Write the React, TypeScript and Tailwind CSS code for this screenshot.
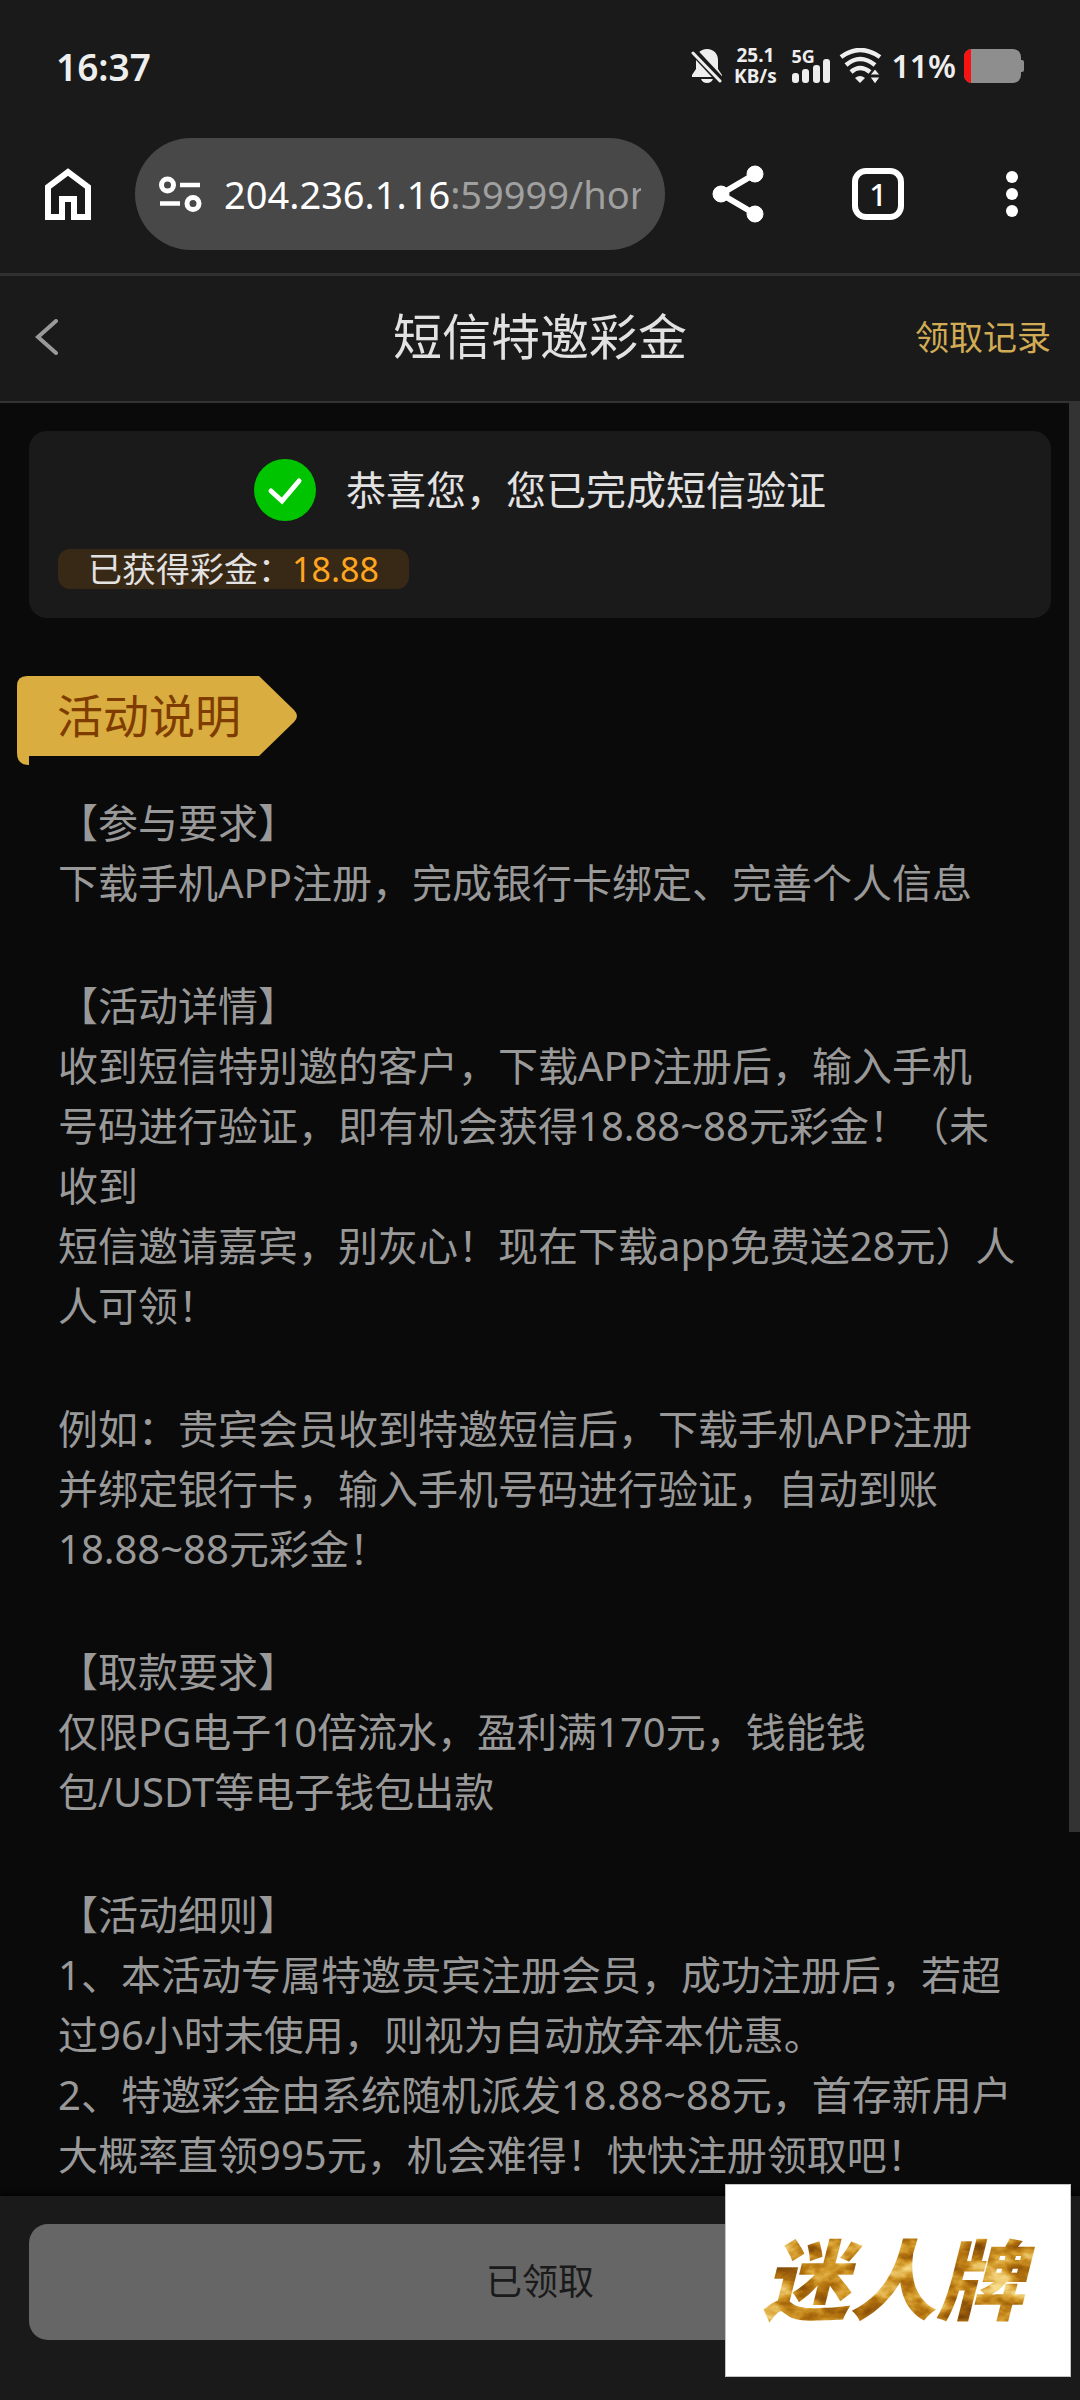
import React from "react";

const rules: { title: string; lines: string[] }[] = [
  {
    title: "【参与要求】",
    lines: ["下载手机APP注册，完成银行卡绑定、完善个人信息"],
  },
  {
    title: "【活动详情】",
    lines: [
      "收到短信特别邀的客户，下载APP注册后，输入手机",
      "号码进行验证，即有机会获得18.88~88元彩金！（未",
      "收到",
      "短信邀请嘉宾，别灰心！现在下载app免费送28元）人",
      "人可领！",
    ],
  },
  {
    title: "",
    lines: [
      "例如：贵宾会员收到特邀短信后，下载手机APP注册",
      "并绑定银行卡，输入手机号码进行验证，自动到账",
      "18.88~88元彩金！",
    ],
  },
  {
    title: "【取款要求】",
    lines: ["仅限PG电子10倍流水，盈利满170元，钱能钱", "包/USDT等电子钱包出款"],
  },
  {
    title: "【活动细则】",
    lines: [
      "1、本活动专属特邀贵宾注册会员，成功注册后，若超",
      "过96小时未使用，则视为自动放弃本优惠。",
      "2、特邀彩金由系统随机派发18.88~88元，首存新用户",
      "大概率直领995元，机会难得！快快注册领取吧！",
    ],
  },
];

function StatusBar() {
  return (
    <div className="flex h-[132px] items-center justify-between pr-14 pl-14 text-[#eeeeee]">
      <span className="text-[37px] leading-none font-semibold">16:37</span>
      <div className="flex items-center">
        <svg className="h-9 w-8" viewBox="0 0 32 36" fill="#eeeeee" aria-label="静音">
          <path d="M16 1c-7 0-11 5-11 11v9l-4 6v2h30v-2l-4-6v-9C27 6 23 1 16 1z" />
          <path d="M10 31h12c-1 2.500-3 4-6 4s-5-1.500-6-4z" />
          <path d="M1 2L31 34" stroke="#1a1a1a" strokeWidth="8" />
          <path d="M2 5L29 33" stroke="#eeeeee" strokeWidth="3" strokeLinecap="round" />
        </svg>
        <div className="ml-3 flex w-10 flex-col items-center text-[19px] leading-[21px] font-bold">
          <span>25.1</span>
          <span>KB/s</span>
        </div>
        <div className="ml-4 flex flex-col">
          <span className="text-[18px] leading-[14px] font-bold">5G</span>
          <svg className="-mt-1 h-6 w-10" viewBox="0 0 40 24" fill="#eeeeee" aria-label="信号">
            <rect x="1" y="14" width="7" height="10" rx="3" />
            <rect x="11" y="10" width="7" height="14" rx="3" />
            <rect x="22" y="6" width="7" height="18" rx="3" />
            <rect x="32" y="0" width="7" height="24" rx="3" />
          </svg>
        </div>
        <svg className="ml-2 h-9 w-[44px]" viewBox="0 0 44 36" fill="none" stroke="#eeeeee" strokeWidth="4.500" aria-label="无线网络">
          <path d="M2 9Q21-5 41 9" />
          <path d="M7 17Q21 5 36 17" />
          <path d="M12 24Q21 16 31 24" />
          <path d="M16 30Q21 26 26 30L21 35z" fill="#eeeeee" stroke="none" />
          <path d="M36 21l5 6H31zM36 36l5-7H31z" fill="#eeeeee" stroke="#1a1a1a" strokeWidth="1" />
        </svg>
        <span className="ml-2 text-[32px] leading-none font-semibold">11%</span>
        <svg className="ml-2 h-[34px] w-[60px]" viewBox="0 0 60 34" aria-label="电量">
          <clipPath id="cell">
            <rect width="57" height="34" rx="8" />
          </clipPath>
          <g clipPath="url(#cell)">
            <rect width="57" height="34" fill="#8e8e8e" />
            <rect width="7" height="34" fill="#f91212" />
          </g>
          <path d="M57 11h1q2 0 2 2v8q0 2-2 2h-1z" fill="#8e8e8e" />
        </svg>
      </div>
    </div>
  );
}

function BrowserBar() {
  return (
    <div className="flex h-[144px] items-center border-b-[3px] border-[#303030] pb-[17px] pl-[45px] text-white">
      <button type="button" aria-label="主页">
        <svg className="h-[52px] w-[46px]" viewBox="0 0 46 52" fill="none" stroke="white" strokeWidth="6">
          <path d="M3 49V19L23 4l20 15v30H29V31H17v18z" />
        </svg>
      </button>
      <button
        type="button"
        aria-label="地址栏"
        className="ml-11 flex h-28 min-w-0 flex-1 items-center rounded-full bg-[#484848] pr-6 pl-6"
      >
        <svg className="h-9 w-[43px] shrink-0" viewBox="0 0 43 36" fill="none" stroke="white" strokeWidth="5">
          <circle cx="8.500" cy="9" r="6" />
          <path d="M21 9h20M1 27.500h20" strokeWidth="4.500" />
          <circle cx="34" cy="27.500" r="6" />
        </svg>
        <span className="ml-[22px] min-w-0 flex-1 overflow-hidden text-left text-[38px] leading-[56px] whitespace-nowrap">
          204.236.1.16<span className="text-[#a0a0a0]">:59999/home</span>
        </span>
      </button>
      <button type="button" aria-label="分享" className="ml-[47px]">
        <svg className="h-[58px] w-[52px]" viewBox="0 0 52 58" fill="white" stroke="white">
          <path d="M43 9L9 29l34 20" fill="none" strokeWidth="6" />
          <circle cx="43" cy="9" r="8" />
          <circle cx="9" cy="29" r="8" />
          <circle cx="43" cy="49" r="8" />
        </svg>
      </button>
      <button
        type="button"
        aria-label="标签页"
        className="ml-[88px] flex size-[52px] items-center justify-center rounded-[14px] border-[6px] border-white text-[31px] leading-none font-medium"
      >
        1
      </button>
      <button type="button" aria-label="更多" className="mr-[62px] ml-[102px]">
        <svg className="h-12 w-3" viewBox="0 0 12 48" fill="white">
          <circle cx="6" cy="7" r="6" />
          <circle cx="6" cy="24" r="6" />
          <circle cx="6" cy="41" r="6" />
        </svg>
      </button>
    </div>
  );
}

function Logo() {
  return (
    <svg className="h-[120px] w-[300px]" viewBox="0 0 300 120" role="img" aria-label="迷人牌">
      <defs>
        <filter id="gold" x="0" y="0" width="1" height="1" colorInterpolationFilters="sRGB">
          <feTurbulence type="fractalNoise" baseFrequency="0.03 0.05" numOctaves="4" seed="7" />
          <feColorMatrix values="1 0 0 0 0  1 0 0 0 0  1 0 0 0 0  0 0 0 0 1" />
          <feComponentTransfer result="foil">
            <feFuncR type="table" tableValues="0.4 0.45 0.56 0.7 0.84 0.94 0.98 1" />
            <feFuncG type="table" tableValues="0.22 0.25 0.33 0.45 0.62 0.8 0.9 0.95" />
            <feFuncB type="table" tableValues="0.02 0.02 0.04 0.06 0.18 0.45 0.6 0.7" />
          </feComponentTransfer>
          <feComposite in="foil" in2="SourceAlpha" operator="in" />
        </filter>
      </defs>
      <text x="145" y="92" textAnchor="middle" className="text-[87px] font-black italic" filter="url(#gold)">
        迷人牌
      </text>
    </svg>
  );
}

export default function App() {
  return (
    <div
      lang="zh-CN"
      className="relative flex min-h-screen flex-col bg-[#0a0a0a] font-['Noto_Sans','Noto_Sans_CJK_SC',sans-serif] [text-spacing-trim:space-all]"
    >
      <div className="bg-[#1a1a1a]">
        <StatusBar />
        <BrowserBar />
        <header className="grid h-[127px] grid-cols-[1fr_auto_1fr] items-center border-b-2 border-[#333333] px-[29px] pb-1">
          <button type="button" aria-label="返回" className="justify-self-start pl-1.5">
            <svg className="h-9 w-6" viewBox="0 0 24 36" fill="none" stroke="#999999" strokeWidth="4" strokeLinecap="round">
              <path d="M21 2L3 18l18 16" />
            </svg>
          </button>
          <h1 className="text-[49px] leading-none text-[#e2e2e2]">短信特邀彩金</h1>
          <a href="#records" className="justify-self-end text-[34px] leading-none text-[#d2ab55]">
            领取记录
          </a>
        </header>
      </div>

      <main className="relative flex-1">
        <div className="absolute top-0 right-0 h-[1429px] w-[11px] bg-[#333333]" />
        <section className="mx-[29px] mt-7 rounded-[18px] bg-[#1a1a1a] px-[29px] pt-7 pb-[29px]">
          <div className="flex items-center justify-center gap-[30px]">
            <svg className="size-[62px]" viewBox="0 0 62 62" fill="none">
              <circle cx="31" cy="31" r="31" fill="#00c400" />
              <path d="M17 32l11 10L45 22" stroke="white" strokeWidth="5" strokeLinecap="round" />
            </svg>
            <p className="text-[40px] leading-[60px] text-[#e2e2e2]">恭喜您，您已完成短信验证</p>
          </div>
          <p className="mt-7 w-fit rounded-xl bg-[#382816] px-[30px] text-[34px] leading-10 text-[#e2e2e2]">
            已获得彩金：<span className="text-[#ffa51f]">18.88</span>
          </p>
        </section>

        <h2 className="relative mt-[58px] ml-[17px] flex h-[89px] w-[280px] items-start pl-10 text-[46px] leading-[78px] text-[#7f3c00]">
          <svg className="absolute inset-0" width="280" height="89" viewBox="0 0 280 89" fill="#d9ad3f" aria-hidden="true">
            <path d="M10 0H242L277 34Q283 40 277 46L242 80H12v9Q0 89 0 77V10Q0 0 10 0z" />
          </svg>
          <span className="relative">活动说明</span>
        </h2>

        <div className="mt-7 flex flex-col gap-[63px] pl-[58px] text-[40px] leading-[60px] whitespace-nowrap text-[#999999]">
          {rules.map((rule) => (
            <section key={rule.lines[0]}>
              {rule.title && <h3>{rule.title}</h3>}
              <p>
                {rule.lines.map((line) => (
                  <React.Fragment key={line}>
                    {line}
                    <br />
                  </React.Fragment>
                ))}
              </p>
            </section>
          ))}
        </div>
      </main>

      <footer className="relative bg-[#1a1a1a] px-[29px] pt-7 pb-[60px] shadow-[0_-2px_10px_#000000]">
        <button type="button" className="h-[116px] w-full rounded-[19px] bg-[#666666] text-[36px] leading-none text-[#1a1a1a]">
          已领取
        </button>
        <div className="absolute right-[9px] bottom-[23px] flex h-[193px] w-[346px] items-center justify-center border border-[#c4c4c4] bg-white">
          <Logo />
        </div>
      </footer>
    </div>
  );
}
